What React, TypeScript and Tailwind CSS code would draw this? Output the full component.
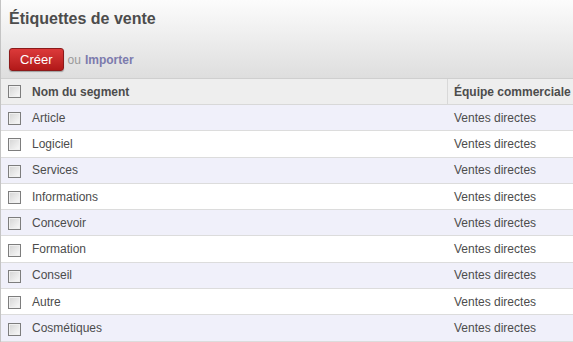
const rows = [
  'Article',
  'Logiciel',
  'Services',
  'Informations',
  'Concevoir',
  'Formation',
  'Conseil',
  'Autre',
  'Cosmétiques',
];

function Box() {
  return (
    <span className="inline-block w-[13px] h-[13px] border border-[#7d7d7d] bg-gradient-to-br from-[#d4d4d4] to-[#fafafa] shadow-[inset_0_0_0_1px_#f0f0f0]" />
  );
}

export default function App() {
  return (
    <div
      className="w-[573px] h-[342px] overflow-hidden bg-white border-l border-[#c4c4c4] text-[12px] text-[#4c4c4c]"
      style={{ fontFamily: '"Liberation Sans", Arial, sans-serif' }}
    >
      {/* Entête */}
      <div className="h-[79px] border-b border-[#cfcfcf] bg-gradient-to-b from-[#fcfcfc] to-[#dedede] px-[8px] pt-[9px]">
        <h1 className="text-[16px] font-bold leading-[20px] text-[#4c4c4c]">Étiquettes de vente</h1>
        <div className="mt-[19px] flex items-center gap-[4px]">
          <button className="h-[23px] px-[10px] rounded-[3px] border border-[#8b1a1a] bg-gradient-to-b from-[#dc3a3a] to-[#b21818] text-white text-[13px] leading-none shadow-[0_1px_1px_rgba(0,0,0,0.3)]">
            Créer
          </button>
          <span className="text-[12px] text-[#9a9a9a]">ou</span>
          <span className="text-[12px] font-bold text-[#7c7bad]">Importer</span>
        </div>
      </div>

      {/* Tableau */}
      <div className="flex h-[26px] items-center bg-[#eeeeee] border-b border-[#d8d8d8] font-bold">
        <div className="w-[26px] flex justify-center pl-[1px]">
          <Box />
        </div>
        <div className="flex-1 pl-[5px] h-full flex items-center">Nom du segment</div>
        <div className="w-[126px] h-full flex items-center pl-[6px] border-l border-[#d8d8d8]">Équipe commerciale</div>
      </div>
      {rows.map((name, i) => (
        <div
          key={name}
          className={
            'flex h-[26.3px] items-center border-b border-[#dcdcdc] ' +
            (i % 2 === 0 ? 'bg-[#f0f0fa]' : 'bg-white')
          }
        >
          <div className="w-[26px] flex justify-center pl-[1px] pt-[2px]">
            <Box />
          </div>
          <div className="flex-1 pl-[5px]">{name}</div>
          <div className="w-[126px] pl-[7px]">Ventes directes</div>
        </div>
      ))}
    </div>
  );
}
